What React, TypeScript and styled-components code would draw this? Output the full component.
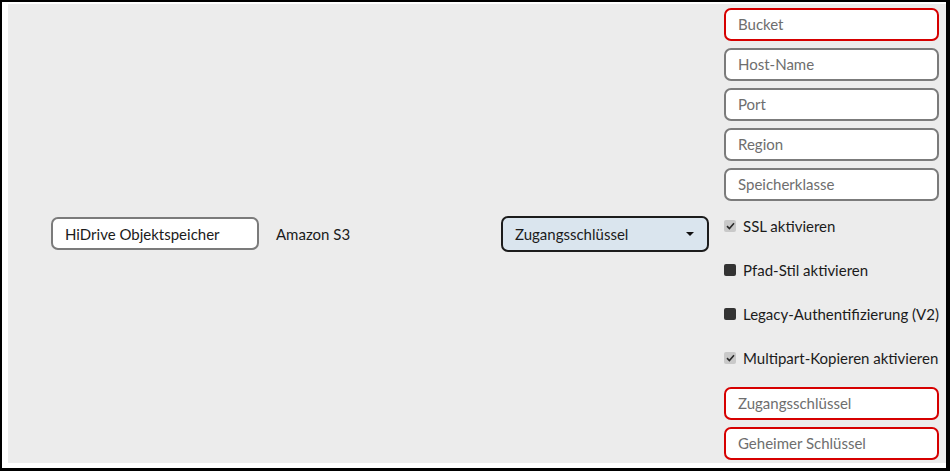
import React from 'react';
import styled, { createGlobalStyle } from 'styled-components';

const GlobalStyle = createGlobalStyle`
  html, body {
    margin: 0;
    padding: 0;
    background: #ffffff;
  }
  body {
    font-family: Lato, "Open Sans", "Liberation Sans", sans-serif;
  }
`;

const Frame = styled.div`
  width: 950px;
  height: 471px;
  box-sizing: border-box;
  border-style: solid;
  border-color: #000000;
  border-width: 2px 4px 3px 2px;
  padding: 2px 0 5px 6px;
  background: #ffffff;
`;

const Panel = styled.div`
  height: 100%;
  background: #ececec;
  display: flex;
  align-items: center;
  padding: 0 6px 0 43px;
  box-sizing: border-box;
`;

const TextBox = styled.div<{ $invalid?: boolean; $placeholder?: boolean; $width?: number }>`
  width: ${p => (p.$width ? `${p.$width}px` : '100%')};
  height: 33px;
  box-sizing: border-box;
  border: 2px solid ${p => (p.$invalid ? '#d60000' : '#7b7b7b')};
  border-radius: 7px;
  background: #ffffff;
  padding: 0 12px;
  display: flex;
  align-items: center;
  font-size: 15px;
  color: ${p => (p.$placeholder ? '#6e6e6e' : '#1b1b1b')};
  flex-shrink: 0;
`;

const ProviderLabel = styled.div`
  width: 242px;
  padding-left: 17px;
  box-sizing: border-box;
  font-size: 15px;
  color: #1b1b1b;
  flex-shrink: 0;
`;

const Select = styled.div`
  width: 208px;
  height: 36px;
  box-sizing: border-box;
  border: 2px solid #1c1c1c;
  border-radius: 7px;
  background: #dae5ee;
  padding: 0 13px 0 12px;
  display: flex;
  align-items: center;
  justify-content: space-between;
  font-size: 15px;
  color: #1b1b1b;
  flex-shrink: 0;
  margin-right: 15px;
`;

const Caret = styled.span`
  width: 0;
  height: 0;
  border-left: 4px solid transparent;
  border-right: 4px solid transparent;
  border-top: 4px solid #111111;
`;

const Column = styled.div`
  width: 215px;
  display: flex;
  flex-direction: column;
  gap: 7px;
  flex-shrink: 0;
`;

const CheckRow = styled.label`
  height: 37px;
  display: flex;
  align-items: center;
  gap: 7px;
  font-size: 15px;
  color: #1b1b1b;
  white-space: nowrap;
`;

const Box = styled.span<{ $checked: boolean }>`
  width: 12px;
  height: 12px;
  border-radius: 2px;
  background: ${p => (p.$checked ? '#c9c9c9' : '#333333')};
  display: flex;
  align-items: center;
  justify-content: center;
  flex-shrink: 0;
`;

const Spacer = styled.div`
  height: 3px;
  margin-top: -7px;
`;

const fields = ['Bucket', 'Host-Name', 'Port', 'Region', 'Speicherklasse'];
const invalid = ['Bucket'];
const checks: [string, boolean][] = [
  ['SSL aktivieren', true],
  ['Pfad-Stil aktivieren', false],
  ['Legacy-Authentifizierung (V2)', false],
  ['Multipart-Kopieren aktivieren', true],
];

const Check = ({ label, checked }: { label: string; checked: boolean }) => (
  <CheckRow>
    <Box $checked={checked}>
      {checked && (
        <svg width="9" height="8" viewBox="0 0 9 8">
          <path d="M1 4.2 L3.4 6.5 L8 1.3" fill="none" stroke="#2a2a2a" strokeWidth="1.6" />
        </svg>
      )}
    </Box>
    {label}
  </CheckRow>
);

const App: React.FC = () => {
  return (
    <>
      <GlobalStyle />
      <Frame>
        <Panel>
          <TextBox $width={208}>HiDrive Objektspeicher</TextBox>
          <ProviderLabel>Amazon S3</ProviderLabel>
          <Select>
            Zugangsschlüssel
            <Caret />
          </Select>
          <Column>
            {fields.map(f => (
              <TextBox key={f} $placeholder $invalid={invalid.includes(f)}>
                {f}
              </TextBox>
            ))}
            {checks.map(([label, checked]) => (
              <Check key={label} label={label} checked={checked} />
            ))}
            <Spacer />
            <TextBox $placeholder $invalid>Zugangsschlüssel</TextBox>
            <TextBox $placeholder $invalid>Geheimer Schlüssel</TextBox>
          </Column>
        </Panel>
      </Frame>
    </>
  );
};

export default App;
